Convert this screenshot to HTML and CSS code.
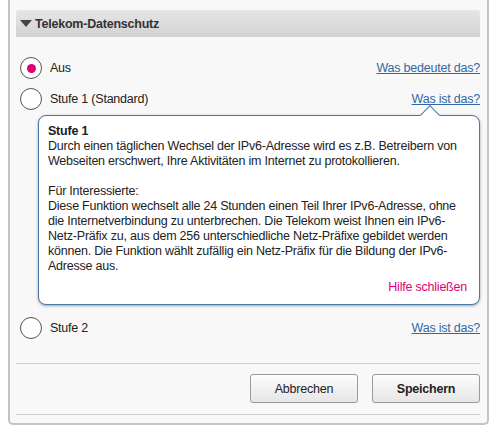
FILE: index.html
```html
<!DOCTYPE html>
<html lang="de">
<head>
<meta charset="utf-8">
<title>Telekom-Datenschutz</title>
<link rel="stylesheet" href="styles.css">
</head>
<body>
<div class="panel">
  <div class="header">
    <span class="caret"></span>
    <span class="title">Telekom-Datenschutz</span>
  </div>
  <div class="option option-first">
    <span class="radio checked"></span>
    <span class="label">Aus</span>
    <a class="help-link" href="#">Was bedeutet das?</a>
  </div>
  <div class="option">
    <span class="radio"></span>
    <span class="label">Stufe 1 (Standard)</span>
    <a class="help-link" href="#">Was ist das?</a>
  </div>
  <div class="tooltip">
    <span class="arrow"></span>
    <div class="tip-title">Stufe 1</div>
    <p class="tip-text">Durch einen täglichen Wechsel der IPv6-Adresse wird es z.B. Betreibern von Webseiten erschwert, Ihre Aktivitäten im Internet zu protokollieren.</p>
    <p class="tip-text">Für Interessierte:<br>Diese Funktion wechselt alle 24 Stunden einen Teil Ihrer IPv6-Adresse, ohne die Internetverbindung zu unterbrechen. Die Telekom weist Ihnen ein IPv6-Netz-Präfix zu, aus dem 256 unterschiedliche Netz-Präfixe gebildet werden können. Die Funktion wählt zufällig ein Netz-Präfix für die Bildung der IPv6-Adresse aus.</p>
    <div class="tip-close"><a href="#">Hilfe schließen</a></div>
  </div>
  <div class="option option-last">
    <span class="radio"></span>
    <span class="label">Stufe 2</span>
    <a class="help-link" href="#">Was ist das?</a>
  </div>
  <div class="actions">
    <button class="btn">Abbrechen</button>
    <button class="btn btn-primary">Speichern</button>
  </div>
</div>
</body>
</html>
```
FILE: styles.css
```css
* { box-sizing: border-box; }
html, body { margin: 0; padding: 0; background: #fff; }
body {
  font-family: "Liberation Sans", Arial, sans-serif;
  font-size: 12.5px;
  letter-spacing: -0.22px;
  color: #222;
}
.panel {
  margin: 0 8px;
  width: 481px;
  background: #f8f8f8;
  border: 2px solid #c4c4c4;
  border-top: none;
  border-radius: 0 0 5px 5px;
  padding: 10px 7px 8px 6px;
}
.header {
  height: 27px;
  display: flex;
  align-items: center;
  padding-left: 4px;
  background: linear-gradient(#e6e6e6, #d2d2d2);
  border-radius: 3px 3px 0 0;
  font-weight: bold;
  color: #333;
}
.caret {
  width: 0; height: 0;
  border-left: 6px solid transparent;
  border-right: 6px solid transparent;
  border-top: 7px solid #444;
  margin-right: 3px;
}
.option {
  display: flex;
  align-items: center;
  height: 22px;
  margin-top: 9px;
  padding-left: 4px;
}
.option-first { margin-top: 20px; }
.option-last { margin-top: 12px; }
.radio {
  width: 22px; height: 22px;
  border: 1px solid #555;
  border-radius: 50%;
  background: #fff;
  display: flex;
  align-items: center;
  justify-content: center;
  margin-right: 8px;
  flex: none;
}
.radio.checked::after {
  content: "";
  width: 9px; height: 9px;
  border-radius: 50%;
  background: #e20074;
}
.label { flex: 1; color: #222; }
.help-link {
  color: #3169a6;
  text-decoration: underline;
}
.tooltip {
  position: relative;
  margin: 5px 0 0 22px;
  background: #fff;
  border: 1px solid #4a78a8;
  border-radius: 8px;
  box-shadow: 0 1px 3px rgba(0,0,0,0.35);
  padding: 8px 10px 9px 9px;
  line-height: 15px;
}
.arrow {
  position: absolute;
  top: -8px;
  right: 42px;
  width: 14px; height: 14px;
  background: #fff;
  border-left: 1px solid #4a78a8;
  border-top: 1px solid #4a78a8;
  transform: rotate(45deg);
}
.tip-title { font-weight: bold; position: relative; }
.tip-text { margin: 0 0 15px; position: relative; }
.tip-text:last-of-type { margin-bottom: 0; }
.tip-close { text-align: right; margin-top: 6px; padding-right: 2px; }
.tip-close a { color: #e20074; text-decoration: none; }
.actions {
  margin-top: 24px;
  border-top: 1px solid #cfcfcf;
  border-bottom: 1px solid #cfcfcf;
  padding: 10px 0 11px;
  display: flex;
  justify-content: flex-end;
  gap: 14px;
}
.btn {
  width: 108px;
  height: 29px;
  font-family: inherit;
  font-size: 12.5px;
  letter-spacing: -0.22px;
  color: #222;
  background: linear-gradient(#fdfdfd, #e6e6e6);
  border: 1px solid #9a9a9a;
  border-radius: 3px;
}
.btn-primary { font-weight: bold; }
```
